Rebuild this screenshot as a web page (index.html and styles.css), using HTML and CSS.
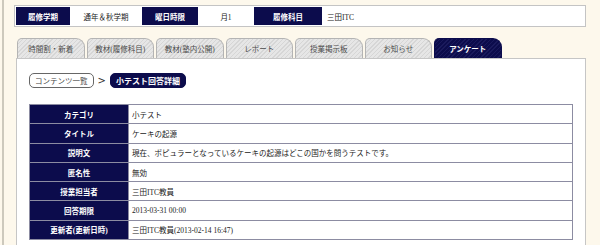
FILE: index.html
```html
<!DOCTYPE html>
<html>
<head>
    <title>小テスト回答詳細</title>
    <meta name="viewport" content="width=device-width, initial-scale=1.0">
    <link rel="stylesheet" href="styles.css">
</head>
<body>
<div class="page">
    <!-- 履修情報 -->
    <div class="info-bar">
        <div class="info-head w1">履修学期</div>
        <div class="info-val w2">通年＆秋学期</div>
        <div class="info-head w3">曜日時限</div>
        <div class="info-val w4">月1</div>
        <div class="info-head w5">履修科目</div>
        <div class="info-val left grow">三田ITC</div>
    </div>

    <!-- タブ -->
    <ul class="tabs">
        <li>時間割・新着</li>
        <li>教材(履修科目)</li>
        <li>教材(塾内公開)</li>
        <li>レポート</li>
        <li>授業掲示板</li>
        <li>お知らせ</li>
        <li class="active">アンケート</li>
    </ul>

    <div class="panel">
        <div class="crumbs">
            <span class="crumb">コンテンツ一覧</span>
            <span class="sep">&gt;</span>
            <span class="crumb current">小テスト回答詳細</span>
        </div>

        <table class="detail">
            <tr><th>カテゴリ</th><td>小テスト</td></tr>
            <tr><th>タイトル</th><td>ケーキの起源</td></tr>
            <tr><th>説明文</th><td>現在、ポピュラーとなっているケーキの起源はどこの国かを問うテストです。</td></tr>
            <tr><th>匿名性</th><td>無効</td></tr>
            <tr><th>授業担当者</th><td>三田ITC教員</td></tr>
            <tr><th>回答期限</th><td>2013-03-31 00:00</td></tr>
            <tr><th>更新者(更新日時)</th><td>三田ITC教員(2013-02-14 16:47)</td></tr>
        </table>
    </div>
</div>
</body>
</html>
```

FILE: styles.css
```css
body {
    margin: 0;
    background: #fdf8ec;
    font-family: "Liberation Serif", "Noto Sans CJK JP", sans-serif;
    font-size: 7.5px;
    color: #222;
}
.page {
    margin-left: 2px;
    border-left: 2px solid #cdc9bd;
    padding: 5px 14px 0 10px;
    height: 240px;
    overflow: hidden;
}

/* info bar */
.info-bar {
    display: flex;
    background: #fff;
    border: 1px solid #c4c4c4;
    padding: 1px;
    height: 18px;
}
.info-head, .info-val {
    display: flex;
    align-items: center;
    justify-content: center;
}
.info-head {
    background: #0c0c4c;
    color: #fff;
    font-weight: bold;
}
.info-val.left {
    justify-content: flex-start;
    padding-left: 5px;
}
.w1 { width: 54px; }
.w2 { width: 72px; }
.w3 { width: 56px; }
.w4 { width: 56px; }
.w5 { width: 68px; }
.grow { flex: 1; }

/* tabs */
.tabs {
    list-style: none;
    margin: 11px 0 0 3px;
    padding: 0;
    display: flex;
    gap: 2px;
}
.tabs li {
    width: 65.5px;
    height: 19px;
    display: flex;
    align-items: center;
    justify-content: center;
    color: #4a4a4a;
    border: 1px solid #b4b4b4;
    border-bottom: none;
    border-radius: 5px 9px 0 0;
    background: repeating-linear-gradient(135deg, #d6d6d6 0 1px, #e6e6e6 1px 3px);
}
.tabs li.active {
    color: #fff;
    font-weight: bold;
    border-color: #0c0c4c;
    background: repeating-linear-gradient(135deg, #1a1a5c 0 1px, #0c0c4c 1px 3px);
}

/* panel */
.panel {
    margin-left: 2px;
    background: #fff;
    border: 1px solid #c6c6c6;
    border-bottom: none;
    padding: 14px 12px 20px 12px;
}
.crumbs {
    display: flex;
    align-items: center;
    gap: 4px;
    height: 15px;
}
.crumb {
    height: 13px;
    padding: 0 5px;
    display: flex;
    align-items: center;
    border: 1px solid #666;
    border-radius: 5px;
    color: #444;
}
.crumb.current {
    background: #0c0c4c;
    border-color: #0c0c4c;
    color: #fff;
    font-weight: bold;
    font-size: 8px;
}
.sep {
    color: #333;
    font-size: 10px;
    font-family: "DejaVu Sans", sans-serif;
}

/* detail table */
.detail {
    margin-top: 16px;
    width: 100%;
    border-collapse: collapse;
    border: 1px solid #7c7c94;
}
.detail th, .detail td {
    height: 18.3px;
    padding: 0 3px;
    border: 1px solid #8c8ca2;
    font-size: 7.5px;
}
.detail th {
    width: 92px;
    background: #0c0c4c;
    color: #fff;
    font-weight: bold;
    text-align: center;
}
.detail td {
    text-align: left;
    color: #222;
}
```
